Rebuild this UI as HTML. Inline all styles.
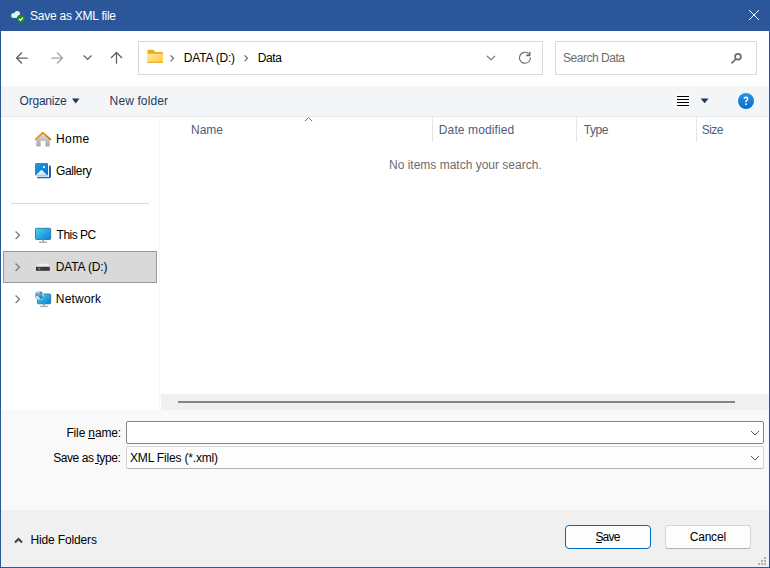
<!DOCTYPE html>
<html><head><meta charset="utf-8">
<style>
*{margin:0;padding:0;box-sizing:border-box}
html,body{width:770px;height:568px;overflow:hidden;background:#fff}
body{position:relative;font-family:"Liberation Sans",sans-serif;font-size:12px;color:#000}
.a{position:absolute}
.t{position:absolute;white-space:pre;line-height:14px}
</style></head><body>
<!-- window frame -->
<div class="a" style="left:0;top:0;width:770px;height:568px;background:#2b579a"></div>
<!-- client -->
<div class="a" style="left:1px;top:31px;width:768px;height:536px;background:#fff"></div>
<!-- title -->
<div class="t" style="left:30px;top:9px;color:#fff;letter-spacing:-0.24px">Save as XML file</div>

<!-- nav bar -->
<div class="a" style="left:138px;top:41px;width:405px;height:34px;border:1px solid #d9d9d9"></div>
<div class="a" style="left:555px;top:41px;width:202px;height:34px;border:1px solid #d9d9d9"></div>
<div class="t" style="left:183.8px;top:51px;letter-spacing:-0.2px">DATA (D:)</div>
<div class="t" style="left:257.8px;top:51px;letter-spacing:-0.43px">Data</div>
<div class="t" style="left:563px;top:51px;color:#6d6d6d;letter-spacing:-0.47px">Search Data</div>

<!-- command bar -->
<div class="a" style="left:1px;top:86px;width:768px;height:30px;background:#f4f5f7"></div>
<div class="a" style="left:1px;top:116px;width:768px;height:1px;background:#e6e7e9"></div>
<div class="t" style="left:19.6px;top:94px;color:#1e3960;letter-spacing:-0.24px">Organize</div>
<div class="t" style="left:109.6px;top:94px;color:#1e3960;letter-spacing:0.12px">New folder</div>

<!-- nav pane -->
<div class="t" style="left:56px;top:132px;letter-spacing:0.4px">Home</div>
<div class="t" style="left:56px;top:164px;letter-spacing:-0.37px">Gallery</div>
<div class="a" style="left:11px;top:203px;width:138px;height:1px;background:#d9d9d9"></div>
<div class="t" style="left:56.6px;top:228px;letter-spacing:-0.52px">This PC</div>
<div class="a" style="left:3px;top:251px;width:154px;height:32px;background:#d9d9d9;border:1px solid #999"></div>
<div class="t" style="left:55.8px;top:260px;letter-spacing:-0.15px">DATA (D:)</div>
<div class="t" style="left:55.8px;top:292px;letter-spacing:0.2px">Network</div>
<div class="a" style="left:159px;top:117px;width:1px;height:293px;background:#f7f7f7"></div>

<!-- file list -->
<div class="t" style="left:191px;top:123px;color:#4c607a">Name</div>
<div class="t" style="left:438.8px;top:123px;color:#4c607a;letter-spacing:0.12px">Date modified</div>
<div class="t" style="left:583.8px;top:123px;color:#4c607a;letter-spacing:-0.5px">Type</div>
<div class="t" style="left:701.8px;top:123px;color:#4c607a;letter-spacing:-0.6px">Size</div>
<div class="a" style="left:432px;top:117px;width:1px;height:25px;background:#e5e5e5"></div>
<div class="a" style="left:576px;top:117px;width:1px;height:25px;background:#e5e5e5"></div>
<div class="a" style="left:696px;top:117px;width:1px;height:25px;background:#e5e5e5"></div>
<div class="t" style="left:389px;top:158px;color:#6d6d6d">No items match your search.</div>
<div class="a" style="left:161px;top:394px;width:608px;height:16px;background:#f0f0f0"></div>
<div class="a" style="left:178px;top:401px;width:557px;height:2px;background:#858585"></div>

<!-- bottom panel -->
<div class="a" style="left:1px;top:410px;width:768px;height:100px;background:#f9f9f9"></div>
<div class="a" style="left:1px;top:510px;width:768px;height:57px;background:#f0f0f0"></div>
<div class="t" style="left:66.4px;top:426px;letter-spacing:-0.14px">File name:</div>
<div class="t" style="left:53.2px;top:451px;letter-spacing:-0.43px">Save as type:</div>
<div class="a" style="left:126px;top:421px;width:638px;height:23px;background:#fff;border:1px solid #858585;border-radius:2px"></div>
<div class="a" style="left:126px;top:446px;width:638px;height:23px;background:#fdfdfd;border:1px solid #d3d3d3;border-bottom-color:#b5b5b5;border-radius:2px"></div>
<div class="t" style="left:130px;top:451px;letter-spacing:-0.18px">XML Files (*.xml)</div>
<div class="t" style="left:30.4px;top:533px;letter-spacing:-0.14px">Hide Folders</div>
<div class="a" style="left:565px;top:525px;width:86px;height:24px;background:#fdfdfd;border:1px solid #0067c0;border-radius:4px"></div>
<div class="a" style="left:665px;top:525px;width:86px;height:24px;background:#fdfdfd;border:1px solid #d3d3d3;border-bottom-color:#b5b5b5;border-radius:3.5px"></div>
<div class="t" style="left:595.4px;top:530px;letter-spacing:-0.8px">Save</div>
<div class="t" style="left:689.7px;top:530px;letter-spacing:-0.2px">Cancel</div>

<!-- ICONS -->
<svg class="a" style="left:0;top:0" width="770" height="568" viewBox="0 0 770 568">
<defs>
<linearGradient id="gFold" x1="0" y1="0" x2="1" y2="1"><stop offset="0" stop-color="#ffe9a6"/><stop offset="1" stop-color="#ffc93a"/></linearGradient>
<linearGradient id="gHelp" x1="0" y1="0" x2="0" y2="1"><stop offset="0" stop-color="#2596e8"/><stop offset="1" stop-color="#0a6cc8"/></linearGradient>
<linearGradient id="gHouse" x1="0" y1="0" x2="0" y2="1"><stop offset="0" stop-color="#dcdfe3"/><stop offset="1" stop-color="#a7a7a7"/></linearGradient>
<linearGradient id="gMon" x1="0" y1="0" x2="1" y2="1"><stop offset="0" stop-color="#3fdcef"/><stop offset="1" stop-color="#1677cf"/></linearGradient>
<linearGradient id="gGal" x1="0" y1="0" x2="1" y2="1"><stop offset="0" stop-color="#1e9be8"/><stop offset="1" stop-color="#0d6fcc"/></linearGradient>
<linearGradient id="gMtn" x1="0" y1="0" x2="0" y2="1"><stop offset="0" stop-color="#ffffff"/><stop offset="1" stop-color="#bfe0f8"/></linearGradient>
<linearGradient id="gRoof" gradientUnits="userSpaceOnUse" x1="35" y1="132" x2="51" y2="140"><stop offset="0" stop-color="#f59a10"/><stop offset="0.5" stop-color="#f28a06"/><stop offset="1" stop-color="#e05a00"/></linearGradient>
<radialGradient id="gGlobe" cx="0.35" cy="0.3" r="0.8"><stop offset="0" stop-color="#6db3e0"/><stop offset="1" stop-color="#2a70ad"/></radialGradient>
</defs>
<!-- title icon -->
<g>
<g fill="#1b6391" stroke="#1b6391" stroke-width="1.3">
<circle cx="13.7" cy="15.4" r="2.5"/><circle cx="17.2" cy="13.9" r="2.8"/><rect x="13.7" y="14" width="3.5" height="3.9"/>
</g>
<g fill="#e8f1f7">
<circle cx="13.7" cy="15.4" r="2.5"/><circle cx="17.2" cy="13.9" r="2.8"/><rect x="13.7" y="14" width="3.5" height="3.9"/>
</g>
<circle cx="21" cy="18.9" r="4.3" fill="#2b579a"/>
<circle cx="21" cy="18.9" r="3.8" fill="#1f8a22"/>
<path d="M19.1 19 L20.4 20.3 L22.9 17.8" fill="none" stroke="#f4f8f4" stroke-width="1.3"/>
</g>
<!-- close X -->
<path d="M749 10 L759 20 M759 10 L749 20" stroke="#fff" stroke-width="1" fill="none"/>
<!-- nav arrows -->
<path d="M16.5 58 H27.7 M22 52.5 L16.5 58 L22 63.5" stroke="#5f5f5f" stroke-width="1.25" fill="none"/>
<path d="M51.3 58 H62.5 M57 52.5 L62.5 58 L57 63.5" stroke="#a3a3a3" stroke-width="1.25" fill="none"/>
<path d="M83.7 55.5 L87.6 59.4 L91.5 55.5" stroke="#5f5f5f" stroke-width="1.25" fill="none"/>
<path d="M116.5 53 V63.7 M111 58 L116.5 52.5 L122 58" stroke="#5f5f5f" stroke-width="1.25" fill="none"/>
<!-- folder -->
<path d="M147.5 51 Q147.5 49.8 148.7 49.8 H153.5 L155.3 52 H161.8 Q163 52 163 53.2 V55 H147.5 Z" fill="#eeac17"/>
<rect x="147" y="53.8" width="16" height="9" rx="1" fill="url(#gFold)"/>
<rect x="147.2" y="61.8" width="15.6" height="1" fill="#e7a823"/>
<!-- address chevrons -->
<path d="M170.5 55.3 L173.5 58.3 L170.5 61.3" stroke="#6a6a6a" stroke-width="1.2" fill="none"/>
<path d="M244.5 55.3 L247.5 58.3 L244.5 61.3" stroke="#6a6a6a" stroke-width="1.2" fill="none"/>
<path d="M487 55.8 L491 59.8 L495 55.8" stroke="#6a6a6a" stroke-width="1.1" fill="none"/>
<!-- refresh -->
<path d="M530.5 57.5 A5.5 5.5 0 1 1 528.6 53.6" stroke="#6a6a6a" stroke-width="1.1" fill="none"/>
<path d="M526.1 55.5 H529.8 V51.8" stroke="#6a6a6a" stroke-width="1.3" fill="none"/><path d="M529.8 52.3 V55.3 H526.8 Z" fill="#6a6a6a" opacity="0.6"/>
<!-- search -->
<circle cx="738" cy="56.8" r="2.9" stroke="#6a6a6a" stroke-width="1.7" fill="none"/>
<path d="M735.8 59 L731.5 63.3" stroke="#6a6a6a" stroke-width="1.7" fill="none"/>
<!-- organize triangle -->
<path d="M72 98.6 H79.5 L75.75 103.5 Z" fill="#1e3960"/>
<!-- list view -->
<rect x="676" y="94" width="14" height="14" fill="#fbfbfc"/>
<path d="M677 96.5 H689 M677 99.5 H689 M677 102.5 H689 M677 105.5 H689" stroke="#000" stroke-width="1"/>
<path d="M700.6 98.6 H708.6 L704.6 103.2 Z" fill="#1e3960"/>
<!-- help -->
<circle cx="746" cy="101" r="8" fill="url(#gHelp)"/>
<path d="M744.3 98.8 Q744.3 97.2 746 97.2 Q747.7 97.2 747.7 98.7 Q747.7 99.7 746.7 100.3 Q746 100.8 746 101.6 V102.3" stroke="#fff" stroke-width="1.45" fill="none"/><rect x="745.2" y="103.4" width="1.6" height="1.6" fill="#fff"/>
<!-- home -->
<path d="M36.3 139 L42.8 133 L49.8 139 V145.5 Q49.8 146.6 48.7 146.6 H45.4 V141 H40.7 V146.6 H37.4 Q36.3 146.6 36.3 145.5 Z" fill="url(#gHouse)"/>
<path d="M35.6 139.4 L42.8 132.6 L50.4 139.4" stroke="url(#gRoof)" stroke-width="1.7" fill="none" stroke-linecap="round" stroke-linejoin="round"/>
<!-- gallery -->
<path d="M49 165.2 Q51 165.2 51 167.2 V176.5 Q51 178.2 49.3 178.2 H37.5 Q37 178.2 37 177.6 V176.6 H49 Z" fill="#1565c6"/><rect x="35.8" y="175.4" width="13.2" height="1.2" fill="#fff"/><rect x="48" y="164" width="1" height="12.6" fill="#fff"/>
<rect x="35" y="163" width="13" height="12.4" rx="1.2" fill="url(#gGal)"/>
<path d="M35.4 175.4 L41.5 169.8 L47.6 175.4 Z" fill="url(#gMtn)"/>
<rect x="43" y="166.2" width="2" height="1.9" fill="#fff"/>
<!-- chevrons nav pane -->
<path d="M15.6 231.6 L19.4 235.3 L15.6 239" stroke="#808080" stroke-width="1.4" fill="none"/>
<path d="M15.6 263.6 L19.4 267.3 L15.6 271" stroke="#808080" stroke-width="1.4" fill="none"/>
<path d="M15.6 295.6 L19.4 299.3 L15.6 303" stroke="#808080" stroke-width="1.4" fill="none"/>
<!-- this pc -->
<rect x="35.5" y="228.3" width="15.2" height="11.2" rx="1" fill="url(#gMon)" stroke="#1a6f9a" stroke-width="0.8"/>
<rect x="42.2" y="239.6" width="1.8" height="2.2" fill="#9ea7b0"/>
<rect x="39" y="241.6" width="8" height="1.4" fill="#a7afb7"/>
<!-- drive -->
<path d="M38 263.7 H48.3 L49.5 266.6 H36.5 Z" fill="#eceef1"/>
<rect x="36" y="266.8" width="13.8" height="4" fill="#3a3a3a"/>
<circle cx="39.5" cy="268.6" r="0.9" fill="#39e03a"/>
<!-- network -->
<rect x="37.5" y="294" width="13.2" height="9.8" rx="1" fill="url(#gMon)" stroke="#1a6f9a" stroke-width="0.8"/>
<rect x="43.2" y="303.8" width="1.8" height="2.2" fill="#9ea7b0"/>
<rect x="40" y="305.8" width="8" height="1.3" fill="#a7afb7"/>
<circle cx="39.3" cy="295.3" r="4.6" fill="#fff" opacity="0.85"/>
<circle cx="39.3" cy="295.3" r="4.1" fill="url(#gGlobe)"/>
<path d="M35.8 296.2 Q37 295.6 38.6 296.8 L40 298.4 Q38.5 299.3 37 298.6 Z" fill="#e4f2fb"/>
<path d="M37 292.4 Q38.4 291.3 40.2 291.6 L39.2 293.2 Q38 293.4 37 292.4 Z" fill="#d2e9f7"/>
<path d="M42.2 292.8 Q43.6 294 43.4 296.2 L42.2 295.6 Z" fill="#dcedf8"/>
<!-- sort caret -->
<path d="M304.8 121.2 L308.5 117.6 L312.2 121.2" stroke="#6a6a6a" stroke-width="1" fill="none"/>
<!-- input chevrons -->
<path d="M751 431 L755 435 L759 431" stroke="#555" stroke-width="1" fill="none"/>
<path d="M751 456 L755 460 L759 456" stroke="#555" stroke-width="1" fill="none"/>
<!-- hide folders caret -->
<path d="M15 542.5 L18.5 539 L22 542.5" stroke="#404040" stroke-width="2" fill="none"/>
<!-- size grip -->
<g fill="#b0b0b0"><rect x="764" y="557" width="2" height="2"/><rect x="761" y="560" width="2" height="2"/><rect x="764" y="560" width="2" height="2"/><rect x="758" y="563" width="2" height="2"/><rect x="761" y="563" width="2" height="2"/><rect x="764" y="563" width="2" height="2"/></g>
<!-- underlines -->
<rect x="596" y="542" width="6" height="1" fill="#000"/>
<rect x="88" y="438" width="7" height="1" fill="#000"/>
<rect x="95" y="463" width="3.5" height="1" fill="#000"/>
</svg>
</body></html>
